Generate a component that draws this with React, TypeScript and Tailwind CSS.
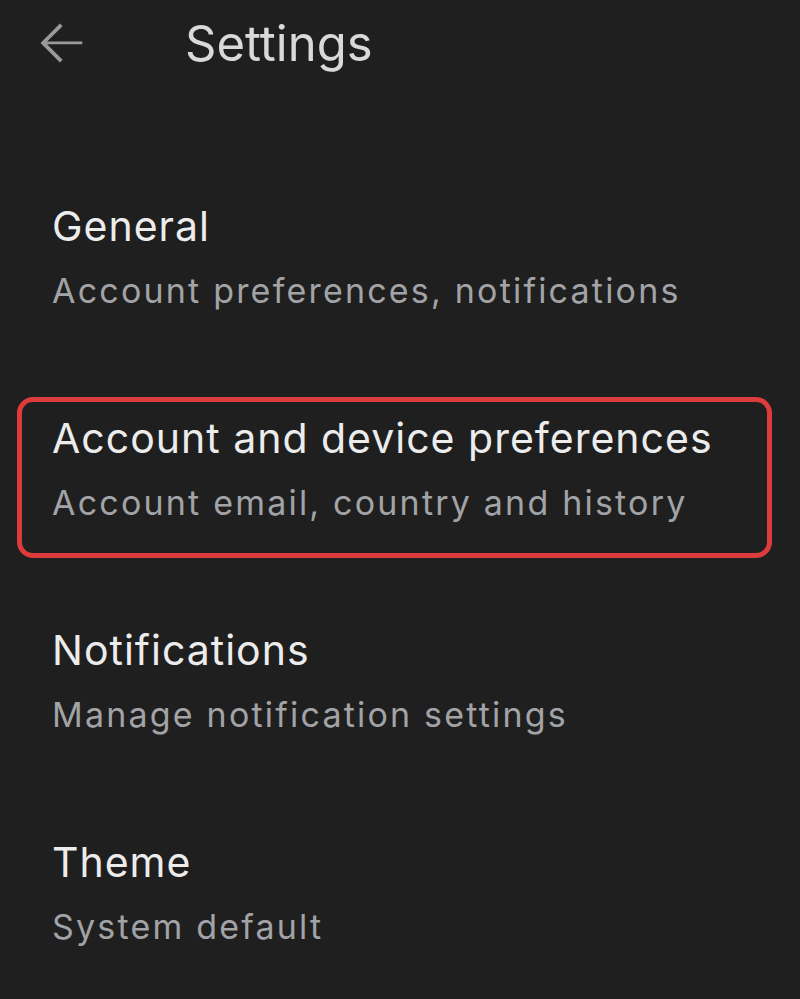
const items = [
  { title: "General", subtitle: "Account preferences, notifications" },
  { title: "Account and device preferences", subtitle: "Account email, country and history", highlight: true },
  { title: "Notifications", subtitle: "Manage notification settings" },
  { title: "Theme", subtitle: "System default" },
];

function BackArrow() {
  return (
    <svg viewBox="0 0 24 24" className="h-[64px] w-[64px]" fill="#9a9a9a">
      <path d="M20 11.1H6.8l5.8-5.8L11.6 4.3 4.3 11.6 11.6 18.9l1-1-5.8-5.8H20z" />
    </svg>
  );
}

export default function App() {
  return (
    <div
      className="min-h-[999px] w-full bg-[#1f1f1f]"
      style={{ fontFamily: "Inter, Roboto, sans-serif" }}
    >
      <header className="flex h-[88px] items-center">
        <div className="ml-[29px] flex items-center">
          <BackArrow />
        </div>
        <h1 className="ml-[92px] -mt-[2px] text-[49px] leading-none text-[#d9d9d9]">Settings</h1>
      </header>

      <ul className="mt-[97px] flex flex-col gap-[51px]">
        {items.map((item) => (
          <li
            key={item.title}
            className={`ml-[17px] mr-[28px] h-[161px] rounded-[16px] border-[5px] pl-[30px] pt-[12px] ${
              item.highlight ? "border-[#dc3c3c]" : "border-transparent"
            }`}
          >
            <div className="text-[41px] leading-[48px] tracking-[1px] text-[#ececec]">{item.title}</div>
            <div className="mt-[19px] text-[34px] leading-[44px] tracking-[2.2px] text-[#a2a3a6]">
              {item.subtitle}
            </div>
          </li>
        ))}
      </ul>
    </div>
  );
}
